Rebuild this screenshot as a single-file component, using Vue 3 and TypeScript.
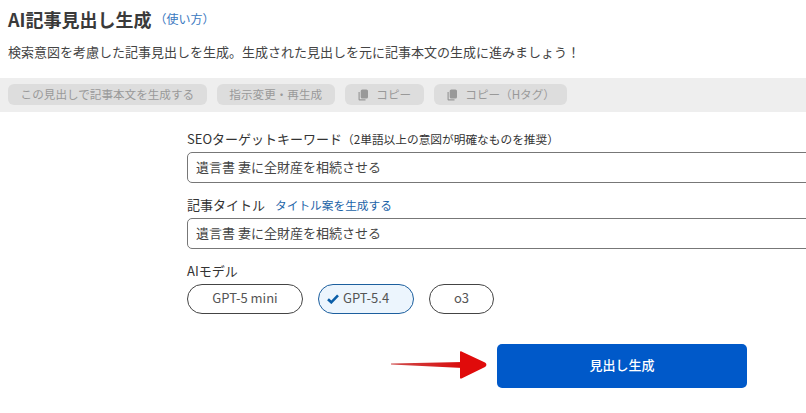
<script setup lang="ts">
const models = [
  { name: 'GPT-5 mini', active: false, width: 116 },
  { name: 'GPT-5.4', active: true, width: 96 },
  { name: 'o3', active: false, width: 65 },
]
const tools = [
  { label: 'この見出しで記事本文を生成する', icon: false },
  { label: '指示変更・再生成', icon: false },
  { label: 'コピー', icon: true },
  { label: 'コピー（Hタグ）', icon: true },
]
const value = '遺言書 妻に全財産を相続させる'
</script>

<template>
  <div class="page">
    <header class="head">
      <h1 class="title">AI記事見出し生成</h1>
      <a class="how">（使い方）</a>
    </header>
    <p class="desc">検索意図を考慮した記事見出しを生成。生成された見出しを元に記事本文の生成に進みましょう！</p>
    <div class="toolbar">
      <button v-for="t in tools" :key="t.label" class="tool" :class="{ 'tool-icon': t.icon }" disabled>
        <svg v-if="t.icon" class="copy" viewBox="0 0 12 12" width="12" height="12">
          <path d="M1.5 3v7.2c0 .7.5 1.3 1.3 1.3H8.500v-1.200H3.200a.5.5 0 0 1-.5-.5V3z" fill="#999" />
          <rect x="3.700" y="0.500" width="7.300" height="9" rx="1.600" fill="#999" />
        </svg>
        <span>{{ t.label }}</span>
      </button>
    </div>
    <form class="form" @submit.prevent>
      <div class="field">
        <label class="label">SEOターゲットキーワード<span class="hint">（2単語以上の意図が明確なものを推奨）</span></label>
        <input class="input" :value="value" />
      </div>
      <div class="field">
        <label class="label">記事タイトル<a class="gen">タイトル案を生成する</a></label>
        <input class="input" :value="value" />
      </div>
      <div class="field">
        <label class="label">AIモデル</label>
        <div class="pills">
          <button
            v-for="m in models"
            :key="m.name"
            type="button"
            class="pill"
            :class="{ active: m.active }"
            :style="{ width: m.width + 'px' }"
          >
            <svg v-if="m.active" class="check" viewBox="0 0 12 10" width="12" height="10">
              <path d="M1 5.200 4.300 8.300 11 1.400" fill="none" stroke="#0a5ea8" stroke-width="2.600" />
            </svg>
            {{ m.name }}
          </button>
        </div>
      </div>
      <div class="submit-row">
        <svg class="arrow" viewBox="0 0 96 30" width="96" height="30">
          <defs>
            <linearGradient id="shaft" x1="0" x2="1" y1="0" y2="0">
              <stop offset="0" stop-color="#cf4a4a" />
              <stop offset="1" stop-color="#d90b0b" />
            </linearGradient>
          </defs>
          <path d="M0 13.500 72 12V18L0 14.500Z" fill="url(#shaft)" />
          <path d="M70.500 1.500 94 12.500a2.500 2.500 0 0 1 0 4.500L70.500 28.500c-1 .4-1.500-.2-1.500-1V2.500c0-.8.5-1.400 1.500-1z" fill="#e00b0b" />
        </svg>
        <button type="button" class="submit">見出し生成</button>
      </div>
    </form>
  </div>
</template>

<style scoped>
.page {
  width: 806px;
  height: 413px;
  overflow: hidden;
  background: #fff;
  color: #333;
  font-family: "Noto Sans CJK JP", "Noto Sans", sans-serif;
}
.head {
  display: flex;
  align-items: center;
  padding: 9px 8px 0;
  height: 29px;
  box-sizing: border-box;
}
.title {
  margin: 0;
  font-size: 18px;
  line-height: 26px;
  font-weight: 700;
  color: #3a3a3a;
}
.how {
  margin-left: 3px;
  font-size: 12px;
  line-height: 20px;
  color: #3a78c0;
}
.desc {
  margin: 12px 0 0 8px;
  font-size: 13px;
  line-height: 22px;
  color: #444;
  white-space: nowrap;
}
.toolbar {
  display: flex;
  gap: 10px;
  height: 34px;
  box-sizing: border-box;
  margin-top: 15px;
  padding: 6px 8px 0;
  background: #eee;
}
.tool {
  height: 21px;
  padding: 0 12.6px;
  border: 0;
  border-radius: 6px;
  background: #ddd;
  color: #999;
  font: inherit;
  font-size: 11.6px;
  line-height: 21px;
  display: flex;
  align-items: center;
  white-space: nowrap;
}
.tool-icon {
  gap: 7px;
}
.copy {
  flex: none;
}
.form {
  width: 870px;
  margin: 18px 0 0 187px;
  display: flex;
  flex-direction: column;
}
.field {
  margin-bottom: 13px;
}
.label {
  display: block;
  height: 22px;
  font-size: 13px;
  line-height: 18px;
  color: #333;
}
.hint {
  font-size: 11.7px;
}
.gen {
  margin-left: 10px;
  font-size: 11.7px;
  color: #1c64a8;
}
.input {
  display: block;
  width: 100%;
  height: 31px;
  box-sizing: border-box;
  padding: 0 8px 2px;
  border: 1px solid #777;
  border-radius: 5px;
  font: inherit;
  font-size: 13px;
  color: #444;
  outline: none;
}
.pills {
  display: flex;
  gap: 15px;
}
.pill {
  height: 30px;
  box-sizing: border-box;
  padding: 0 0 3px;
  border: 1px solid #444;
  border-radius: 15px;
  background: #fff;
  color: #555;
  font: inherit;
  font-size: 13px;
  display: flex;
  align-items: center;
  justify-content: center;
  white-space: nowrap;
}
.pill.active {
  gap: 4px;
  justify-content: flex-start;
  padding-left: 8px;
  border-color: #1c5f9e;
  background: #ecf5fd;
}
.check {
  margin-top: 3px;
}
.submit-row {
  position: relative;
  display: flex;
  justify-content: center;
  margin-top: 17px;
}
.arrow {
  position: absolute;
  left: 204px;
  top: 6px;
}
.submit {
  width: 250px;
  height: 44px;
  border: 0;
  border-radius: 5px;
  padding: 0 0 3px;
  background: #0059c9;
  color: #fff;
  font: inherit;
  font-size: 13px;
  font-weight: 500;
}
</style>
